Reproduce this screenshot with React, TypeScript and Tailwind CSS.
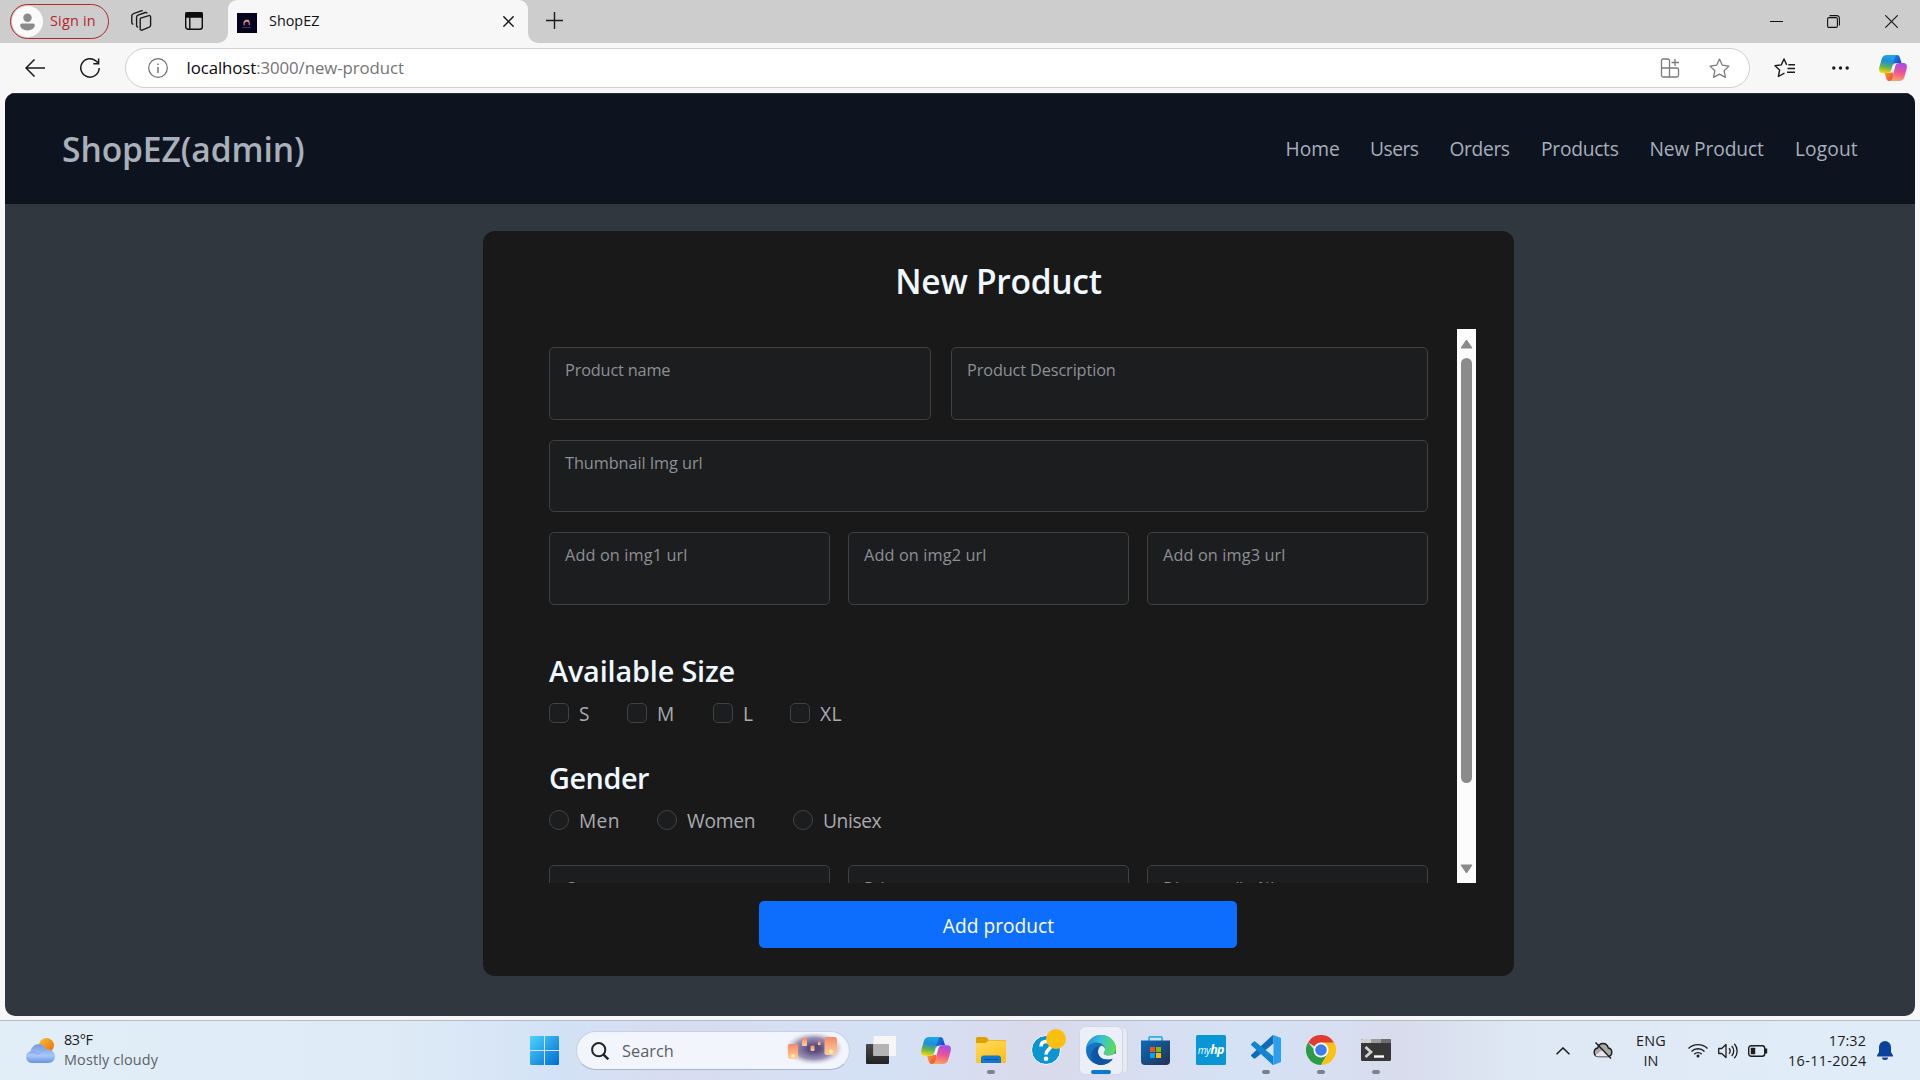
import type { ReactNode } from "react";

function Copilot({ id, className }: { id: string; className: string }) {
  return (
    <svg viewBox="0 0 28 26" className={className} preserveAspectRatio="none">
      <defs>
        <linearGradient id={id + "a"} x1="0.5" y1="0" x2="0.3" y2="1">
          <stop offset="0" stopColor="#1ea7ea" />
          <stop offset="0.35" stopColor="#1c8fd8" />
          <stop offset="0.65" stopColor="#5bb05a" />
          <stop offset="1" stopColor="#f5d800" />
        </linearGradient>
        <linearGradient id={id + "b"} x1="0.6" y1="0" x2="0.4" y2="1">
          <stop offset="0" stopColor="#a54df0" />
          <stop offset="0.5" stopColor="#ee5396" />
          <stop offset="1" stopColor="#fba45f" />
        </linearGradient>
        <linearGradient id={id + "c"} x1="0" y1="0" x2="1" y2="1">
          <stop offset="0" stopColor="#1a8ef0" />
          <stop offset="1" stopColor="#1b31b8" />
        </linearGradient>
        <linearGradient id={id + "d"} x1="0" y1="0" x2="1" y2="1">
          <stop offset="0" stopColor="#ffb03a" />
          <stop offset="1" stopColor="#e8402f" />
        </linearGradient>
      </defs>
      <path d="M13 0h5c2 0 2.600 1.500 3.200 3.800L22.500 8h-4c-2.500 0-3.500 1.500-4.200 4z" fill={`url(#${id}c)`} />
      <path d="M15 26h-5c-2 0-2.500-1.500-3.100-3.800L5.600 18h4c2.500 0 3.500-1.500 4.200-4z" fill={`url(#${id}d)`} />
      <path d="M8 0h11c-2 0-2.900 1.500-3.600 4l-2.800 10c-.8 3-1.700 4-4.200 4H3.500C.5 18-.4 15.500.3 12.500l2.400-8.700C3.500 1.300 5 0 8 0z" fill={`url(#${id}a)`} />
      <path d="M20 26H10c2 0 2.900-1.500 3.600-4l2.400-10c.8-3 1.700-4 4.200-4h4.300c3 0 3.900 2.500 3.200 5.500l-2.400 8.700C24.500 24.700 23 26 20 26z" fill={`url(#${id}b)`} />
      <path d="M17.300 8.600c-.9.700-1.300 1.900-1.700 3.400l-1.500 5.400h-2.600c.9-.7 1.200-1.900 1.600-3.400l1.600-5.400z" fill="#f7f5fb" />
    </svg>
  );
}

function TabStrip() {
  return (
    <div className="flex h-[43px] bg-[#cdcdcd]">
      <div className="mt-1 ml-[10px] flex h-[35px] w-[99px] items-center rounded-full border-[1.5px] border-[#b5262b] pl-px">
        <div className="flex size-[31px] items-center justify-center rounded-full bg-[#fafafa]">
          <svg viewBox="0 0 16 18" className="h-[18px] w-[15px]" fill="#8b8b8b">
            <circle cx="8" cy="4.500" r="4.500" />
            <path d="M2 10.500h12a1.800 1.800 0 0 1 1.800 1.800C15.800 16 12 18 8 18S.2 16 .2 12.300A1.800 1.800 0 0 1 2 10.500z" />
          </svg>
        </div>
        <span className="ml-[7px] pb-px text-[14.4px] leading-5 tracking-[0.2px] whitespace-nowrap text-[#b5262b]">Sign in</span>
      </div>
      <svg viewBox="0 0 22 22" className="mt-[10px] ml-[21px] size-[22px]" fill="none" stroke="#1b1b1b" strokeWidth="1.400">
        <path d="M10.700 8.200l8.200-2.600a1.300 1.300 0 0 1 1.700 1.200v8.400c0 1-.4 1.500-1.300 1.900l-7.300 3a1.300 1.300 0 0 1-1.800-1.200v-9c0-.9 0-1.400.5-1.700z" />
        <path d="M17 3.400c0-.8-.8-1.200-1.600-.9L8 5.200c-.9.3-1.400.9-1.400 1.900v8.500c0 1 .8 1.500 1.600 1.400" />
        <path d="M12.600 1.200c-.3-.4-.8-.5-1.400-.3L4.200 3.300c-1.200.4-2.400 1-2.400 2.300v6.800c0 1 .5 1.700 1.500 1.900" />
      </svg>
      <svg viewBox="0 0 18 18" className="mt-[12px] ml-[33px] size-[18px]" fill="none" stroke="#0d0d0d" strokeWidth="1.400">
        <rect x="0.700" y="0.700" width="16.600" height="16.600" rx="2.500" />
        <path d="M1 1h16v4H1z" fill="#0d0d0d" />
        <path d="M4.800 4v13" />
      </svg>
      <div className="flex w-[25px] items-end justify-end bg-[#f7f7f7]">
        <div className="h-full w-full rounded-br-[10px] bg-[#cdcdcd]" />
      </div>
      <div className="flex w-[300px] items-center rounded-t-[9px] bg-[#f7f7f7]">
        <svg viewBox="0 0 20 20" className="mt-[2px] ml-[9px] size-5">
          <rect width="20" height="20" fill="#05021f" />
          <path d="M7.500 12.300a2.700 2.700 0 1 1 4.600-.2" fill="none" stroke="#a257a8" strokeWidth="1.500" />
          <path d="M7.200 9.500a2.700 2.700 0 0 1 4.800-1" fill="none" stroke="#f0a05c" strokeWidth="1.500" />
          <path d="M5 14.500h9" stroke="#4a2b50" strokeWidth="1" />
        </svg>
        <span className="ml-3 w-[234px] pb-[2px] text-[14.4px] leading-5 text-[#111]">ShopEZ</span>
        <svg viewBox="0 0 10 10" className="size-[11px]" stroke="#1b1b1b" strokeWidth="1.400">
          <path d="M0.300 0.300l9.400 9.400M9.700 0.300L0.300 9.700" />
        </svg>
      </div>
      <div className="w-[12px] bg-[#f7f7f7]">
        <div className="h-full w-full rounded-bl-[10px] bg-[#cdcdcd]" />
      </div>
      <svg viewBox="0 0 17 17" className="mt-[12px] ml-[6px] size-[17px]" stroke="#1b1b1b" strokeWidth="1.400">
        <path d="M8.500 0v17M0 8.500h17" />
      </svg>
      <div className="ml-auto flex items-center pr-[22px]">
        <div className="mr-[44px] h-[1.500px] w-[13px] bg-[#111]" />
        <svg viewBox="0 0 13 13" className="mr-[45px] size-[13px]" fill="none" stroke="#111" strokeWidth="1.100">
          <rect x="0.600" y="2.600" width="9.800" height="9.800" rx="1.400" />
          <path d="M2.600 0.600h7.300a2.500 2.500 0 0 1 2.500 2.500v7.300" />
        </svg>
        <svg viewBox="0 0 13 13" className="size-[13px]" stroke="#111" strokeWidth="1.100">
          <path d="M0.300 0.300l12.400 12.400M12.700 0.300L0.300 12.700" />
        </svg>
      </div>
    </div>
  );
}

const star = "M10 1l2.700 5.900 6.300.8-4.600 4.400 1.200 6.400L10 15.400l-5.600 3.100 1.200-6.400L1 7.700l6.300-.8z";

function Toolbar() {
  return (
    <div className="flex h-[50px] items-center bg-[#f7f7f7]">
      <svg viewBox="0 0 20 18" className="-mt-px ml-[25px] h-[18px] w-5" fill="none" stroke="#1b1b1b" strokeWidth="1.500">
        <path d="M20 9H1M9.500 0.500L1 9l8.500 8.500" />
      </svg>
      <svg viewBox="0 0 20 20" className="ml-[35px] size-5" fill="none" stroke="#1b1b1b" strokeWidth="1.500">
        <path d="M19.200 10a9.200 9.200 0 1 1-2.600-6.500l1.800 2M18.600 0.500v5.200h-5.300" />
      </svg>
      <div className="ml-[25px] flex h-10 w-[1625px] items-center rounded-full border border-[#cfcfcf] bg-white">
        <svg viewBox="0 0 20 20" className="ml-[21.500px] size-5" fill="none" stroke="#6b6b6b" strokeWidth="1.200">
          <circle cx="10" cy="10" r="9.300" />
          <path d="M10 9v6M10 5.500v1.600" strokeWidth="1.400" />
        </svg>
        <div className="ml-[19px] text-[16.8px] leading-6 tracking-[-0.070px] text-[#747474]">
          <span className="text-[#0a0a0a]">localhost</span>:3000/new-product
        </div>
        <svg viewBox="0 0 20 20" className="mr-[29px] ml-auto size-5" fill="none" stroke="#7a7a7a" strokeWidth="1.300">
          <path d="M9.500 19V2.500A1.500 1.500 0 0 0 8 1H3a1.500 1.500 0 0 0-1.500 1.500V17.500A1.500 1.500 0 0 0 3 19h14a1.500 1.500 0 0 0 1.500-1.500V11.500A1.500 1.500 0 0 0 17 10H1.500M15 1v7M11.500 4.500h7.500" />
        </svg>
        <svg viewBox="0 0 20 20" className="mr-[19.500px] size-[21px]" fill="none" stroke="#7a7a7a" strokeWidth="1.200" strokeLinejoin="round">
          <path d={star} />
        </svg>
      </div>
      <svg viewBox="0 0 21 20" className="ml-[24px] h-5 w-[21px]" fill="none" stroke="#1b1b1b" strokeWidth="1.400" strokeLinejoin="round">
        <path d="M10.500 15.600l-.5-.2-5.600 3.100 1.200-6.400L1 7.700l6.300-.8L10 1l2.700 5.900M13.500 10.500H21M14.300 6.800H21M13 14.300h8" />
      </svg>
      <svg viewBox="0 0 17 4" className="ml-[36.500px] h-1 w-[17px]" fill="#1b1b1b">
        <circle cx="1.800" cy="2" r="1.700" />
        <circle cx="8.500" cy="2" r="1.700" />
        <circle cx="15.200" cy="2" r="1.700" />
      </svg>
      <Copilot id="tb" className="ml-[30.500px] h-[26px] w-[28px]" />
    </div>
  );
}

const links: [string, string][] = [
  ["Home", "w-[84.500px]"],
  ["Users", "w-[79.500px] tracking-[-0.500px]"],
  ["Orders", "w-[91.500px] tracking-[-0.350px]"],
  ["Products", "w-[108.500px] tracking-[-0.250px]"],
  ["New Product", "w-[145.500px] tracking-[-0.120px]"],
  ["Logout", "w-[64px] tracking-[0.100px]"],
];

function Field({ label, className }: { label: string; className: string }) {
  return (
    <div className={"shrink-0 rounded-[5px] border border-[#3e4042] bg-[#1c1d1f] px-[15px] pt-[10px] text-[16.300px] leading-6 text-[#8d9094] " + className}>
      {label}
    </div>
  );
}

function Choice({ label, box, text }: { label: string; box: string; text: string }) {
  return (
    <label className={"flex h-5 shrink-0 items-center text-[19.200px] leading-5 text-[#a8abaf] " + text}>
      <span className={"mr-[10px] size-5 shrink-0 border border-[#404244] bg-[#1c1d1f] " + box} />
      <span className="pt-[2px]">{label}</span>
    </label>
  );
}

function Scrollbar() {
  return (
    <div className="flex h-[554px] w-[19px] flex-col items-center bg-[#fcfcfc]">
      <svg viewBox="0 0 13 10" className="mt-[10px] h-[10px] w-[13px]" fill="#8b8b8b" stroke="#8b8b8b" strokeLinejoin="round">
        <path d="M6.500 1L12 9H1z" />
      </svg>
      <div className="mt-[9px] h-[425px] w-[11px] rounded-full bg-[#8b8b8b]" />
      <svg viewBox="0 0 13 10" className="mt-auto mb-[9px] h-[10px] w-[13px]" fill="#8b8b8b" stroke="#8b8b8b" strokeLinejoin="round">
        <path d="M6.500 9L12 1H1z" />
      </svg>
    </div>
  );
}

function Page() {
  return (
    <div className="mx-[5px] h-[923px] overflow-hidden rounded-[10px] bg-[#30373f]">
      <header className="flex h-[111px] items-center border-t border-[#2a3038] bg-[#0d141f]">
        <h1 className="ml-[57px] text-[33.600px] leading-10 font-semibold tracking-[-0.080px] text-[#a9b0ba]">ShopEZ(admin)</h1>
        <nav className="ml-auto flex pr-[56px] text-[19.200px] leading-6 whitespace-nowrap text-[#a7afbb]">
          {links.map(([name, style]) => (
            <a key={name} className={style}>{name}</a>
          ))}
        </nav>
      </header>
      <main className="mt-[27px] ml-[478px] flex h-[745px] w-[1031px] flex-col rounded-[12px] bg-[#191919]">
        <h2 className="mt-[30px] h-10 text-center text-[33.600px] leading-10 font-semibold tracking-[-0.300px] text-[#f0f8ff]">New Product</h2>
        <div className="mt-[28px] flex h-[554px] overflow-hidden">
          <div className="ml-[66px] w-[908px] shrink-0 pt-[18px]">
            <div className="flex w-[879px] justify-between">
              <Field label="Product name" className="h-[73px] w-[382px] tracking-[-0.160px]" />
              <Field label="Product Description" className="h-[73px] w-[477px] tracking-[-0.120px]" />
            </div>
            <Field label="Thumbnail Img url" className="mt-5 h-[72px] w-[879px] tracking-[-0.080px]" />
            <div className="mt-5 flex w-[879px] justify-between">
              <Field label="Add on img1 url" className="h-[73px] w-[281px] tracking-[0.120px]" />
              <Field label="Add on img2 url" className="h-[73px] w-[281px] tracking-[0.120px]" />
              <Field label="Add on img3 url" className="h-[73px] w-[281px] tracking-[0.120px]" />
            </div>
            <h3 className="mt-[48px] h-9 text-[28.800px] leading-9 font-semibold tracking-[-0.150px] text-[#f0f8ff]">Available Size</h3>
            <div className="mt-[14px] flex">
              <Choice label="S" box="rounded-[5px]" text="w-[78px]" />
              <Choice label="M" box="rounded-[5px]" text="w-[86px]" />
              <Choice label="L" box="rounded-[5px]" text="w-[77px]" />
              <Choice label="XL" box="rounded-[5px]" text="tracking-[0.500px]" />
            </div>
            <h3 className="mt-[37px] h-9 text-[28.800px] leading-9 font-semibold tracking-[-0.450px] text-[#f0f8ff]">Gender</h3>
            <div className="mt-[14px] flex">
              <Choice label="Men" box="rounded-full" text="w-[108px] tracking-[0.300px]" />
              <Choice label="Women" box="rounded-full" text="w-[136px] tracking-[-0.250px]" />
              <Choice label="Unisex" box="rounded-full" text="tracking-[-0.400px]" />
            </div>
            <div className="mt-[35px] flex w-[879px] justify-between">
              <Field label="Category" className="h-[73px] w-[281px]" />
              <Field label="Price" className="h-[73px] w-[281px]" />
              <Field label="Discount (in %)" className="h-[73px] w-[281px]" />
            </div>
          </div>
          <Scrollbar />
        </div>
        <button className="mt-[18px] ml-[276px] h-[47px] w-[478px] rounded-[5px] bg-[#0d6efd] pt-[2px] pl-px text-[19.200px] leading-6 text-white">Add product</button>
      </main>
    </div>
  );
}

function TaskItem({ children, mark }: { children: ReactNode; mark?: boolean }) {
  return (
    <div className="flex h-[60px] w-[55px] shrink-0 flex-col items-center pt-[14px]">
      <div className="flex h-[30px] items-center justify-center">{children}</div>
      {mark && <div className="mt-[5px] h-1 w-2 rounded-full bg-[#7d8189]" />}
    </div>
  );
}

function Lantern() {
  return (
    <svg viewBox="0 0 56 31" className="h-[31px] w-[56px]">
      <defs>
        <radialGradient id="night">
          <stop offset="0.200" stopColor="#584c80" />
          <stop offset="0.650" stopColor="#8a80a8" stopOpacity="0.850" />
          <stop offset="1" stopColor="#c8c4dc" stopOpacity="0" />
        </radialGradient>
        <linearGradient id="lamp" x1="0" y1="0" x2="0" y2="1">
          <stop offset="0" stopColor="#f58a63" />
          <stop offset="1" stopColor="#ffcf9e" />
        </linearGradient>
      </defs>
      <ellipse cx="28" cy="15.500" rx="29" ry="16.500" fill="url(#night)" />
      <g fill="url(#lamp)">
        <rect x="2" y="11" width="10" height="15" rx="2" />
        <rect x="16" y="5" width="5" height="8" rx="1" />
        <rect x="24.500" y="12.500" width="4" height="5.500" rx="1" />
        <rect x="32" y="8.500" width="2.500" height="3.500" rx="0.500" />
        <rect x="38.500" y="4" width="12.500" height="18" rx="2.500" />
      </g>
      <circle cx="7" cy="23" r="1.800" fill="#fff2a0" />
      <circle cx="45" cy="18.500" r="2" fill="#fff2a0" />
    </svg>
  );
}

function Taskbar() {
  return (
    <div className="flex h-[60px] items-start border-t border-[#b3bcc6] bg-[linear-gradient(90deg,#e1edf7_0%,#dfebf6_20%,#d3e2f6_29%,#d8dcf0_35%,#d4e1f5_46%,#d9daeb_54%,#d5e2f6_65%,#d8dcec_73%,#dfe9f5_80%,#e0edf8_100%)]">
      <svg viewBox="0 0 30 26" className="mt-[17px] ml-[25px] h-[26px] w-[30px]">
        <defs>
          <linearGradient id="sun" x1="0" y1="0" x2="1" y2="1">
            <stop offset="0" stopColor="#f5c131" />
            <stop offset="1" stopColor="#ef6a10" />
          </linearGradient>
          <linearGradient id="cloud" x1="0" y1="0" x2="0" y2="1">
            <stop offset="0" stopColor="#6f9ae8" />
            <stop offset="0.600" stopColor="#a9c6f7" />
            <stop offset="1" stopColor="#6a93e6" />
          </linearGradient>
        </defs>
        <circle cx="21.500" cy="7.500" r="7.500" fill="url(#sun)" />
        <path d="M6 25a6 6 0 0 1-.5-11.700C6.500 9 9.500 6.300 13.500 6.300c3.700 0 6.300 2 7.500 5.200 5-.8 9 2.500 9 6.800 0 4-3 6.700-6.700 6.700z" fill="url(#cloud)" />
        <path d="M5 14.500c3-1 6 0 8 2 2-2.500 5-5 8-5" fill="none" stroke="#7b9fea" strokeWidth="0.800" />
      </svg>
      <div className="mt-[9px] ml-[9px] w-[466px] text-[14.400px] leading-5">
        <div className="tracking-[-0.400px] text-[#191919]">83°F</div>
        <div className="tracking-[0.150px] text-[#5c6167]">Mostly cloudy</div>
      </div>
      <svg viewBox="0 0 29 29" className="mt-[15px] size-[29px] shrink-0">
        <defs>
          <linearGradient id="win" x1="0" y1="0" x2="1" y2="1">
            <stop offset="0" stopColor="#4fd3ff" />
            <stop offset="1" stopColor="#006cd0" />
          </linearGradient>
        </defs>
        <path d="M1 0h13v14H0V1a1 1 0 0 1 1-1zM15 0h13a1 1 0 0 1 1 1v13H15zM0 15h14v14H1a1 1 0 0 1-1-1zM15 15h14v13a1 1 0 0 1-1 1H15z" fill="url(#win)" />
      </svg>
      <div className="mt-[10px] ml-[17px] flex h-[39px] w-[274px] shrink-0 items-center rounded-full border border-b-[#a9b3c8] border-[#c6d0e0] bg-[#f2f5fc]">
        <svg viewBox="0 0 18 18" className="ml-[14px] size-[18px]" fill="none" stroke="#242424" strokeWidth="2">
          <circle cx="7.700" cy="7.700" r="6.600" />
          <path d="M12.300 12.300l5 5" strokeWidth="2.400" />
        </svg>
        <span className="ml-[12px] w-[114px] pl-px text-[16.300px] leading-6 tracking-[0.050px] text-[#5b5e64]">Search</span>
        <div className="ml-[51px] -translate-y-[2px]">
          <Lantern />
        </div>
      </div>
      <div className="ml-[3px] flex">
        <TaskItem>
          <svg viewBox="0 0 30 28" className="h-[28px] w-[30px]">
            <defs>
              <linearGradient id="tv" x1="0" y1="0" x2="0" y2="1">
                <stop offset="0" stopColor="#4a4a48" />
                <stop offset="1" stopColor="#222" />
              </linearGradient>
            </defs>
            <rect y="8" width="23" height="20" rx="1" fill="url(#tv)" />
            <rect x="7.500" width="22.500" height="20" rx="1" fill="#f6f6f6" />
            <rect x="7.500" y="8" width="15.500" height="12" fill="#b4b4b4" />
          </svg>
        </TaskItem>
        <TaskItem>
          <Copilot id="bar" className="h-[27px] w-[30px]" />
        </TaskItem>
        <TaskItem mark>
          <svg viewBox="0 0 30 26" className="h-[26px] w-[30px]">
            <defs>
              <linearGradient id="fold" x1="0" y1="0" x2="0.500" y2="1">
                <stop offset="0" stopColor="#ffda62" />
                <stop offset="1" stopColor="#fcc21b" />
              </linearGradient>
            </defs>
            <path d="M0 1.500A1.500 1.500 0 0 1 1.500 0h8.600l2.800 3H29a1 1 0 0 1 1 1v8H0z" fill="#e0a000" />
            <path d="M0 6h9.500l3-2.500H29a1 1 0 0 1 1 1V26H0z" fill="url(#fold)" />
            <path d="M5 26v-4.500a3 3 0 0 1 3-3h14a3 3 0 0 1 3 3V26z" fill="#0f78d0" />
            <path d="M8 22.500h14" stroke="#0a4f96" strokeWidth="1" />
          </svg>
        </TaskItem>
        <TaskItem>
          <div className="relative flex size-[30px] items-center justify-center rounded-full border-[1.500px] border-white bg-[#0d95d2]">
            <svg viewBox="0 0 14 22" className="h-[23px] w-[14px]" fill="none" stroke="#fff" strokeWidth="3.600">
              <path d="M2 7C2 3.500 4 2 7 2s5 1.600 5 4.300C12 10 7 10 7 15" />
              <circle cx="7" cy="19.300" r="2.300" fill="#fff" stroke="none" />
            </svg>
            <span className="absolute -top-[7px] left-[14.500px] size-[20px] rounded-full bg-[#fdbf0f]" />
          </div>
        </TaskItem>
        <div className="flex w-[55px] justify-center pt-[5px] pl-px">
          <div className="relative flex h-[49px] w-[44px] flex-col items-center rounded-[6px] border border-[#d5d8e4] bg-[#eceff8] pt-[8px]">
            <span className="absolute top-0 left-[43px] h-[47px] w-[5px] rounded-r-[6px] border border-l-0 border-[#d0d4e2] bg-[#e6e9f4]" />
            <svg viewBox="0 0 30 30" className="size-[30px] shrink-0">
              <defs>
                <linearGradient id="edgeTop" x1="0" y1="0.300" x2="1" y2="0.500">
                  <stop offset="0" stopColor="#1f8fe0" />
                  <stop offset="0.450" stopColor="#35c1d8" />
                  <stop offset="1" stopColor="#62dd4e" />
                </linearGradient>
                <linearGradient id="edgeLow" x1="0" y1="0" x2="1" y2="1">
                  <stop offset="0" stopColor="#1a86d8" />
                  <stop offset="1" stopColor="#0c4a94" />
                </linearGradient>
              </defs>
              <circle cx="15" cy="15" r="15" fill="url(#edgeLow)" />
              <path d="M0.200 13C1.500 5.500 7.500 0 15 0c8.500 0 15 6 15 13.500 0 4.500-3.500 7-7.500 7-3.500 0-5-1.300-4.800-2.500.2-.8 1.300-1.500 1.300-3.700C19 11 15.500 7.500 10.500 7.500 5.500 7.500 2 10 .2 13z" fill="url(#edgeTop)" />
              <path d="M17.700 18c-.2 1.200 1.300 2.500 4.800 2.500 2.400 0 4.400-.7 6-1.900l1.500.4v4l-2.600 1.300c-2 .9-5.900.2-7.900 0-5-.5-8-4.500-7.500-8.500.3-2.800 1.800-4.600 4-5.300C18 12 19 13 19 14.500c0 2-1 2.500-1.300 3.500z" fill="#eceff8" />
              <path d="M12 17c0 4 3.500 7.800 8 7.800 2.500 0 5-.5 6.800-1.600A15 15 0 0 1 13.500 30C9 29 5.500 25 5.500 20c0-5 3.500-8 8-8.500C12.500 13 12 15 12 17z" fill="#0f55a5" />
            </svg>
            <span className="mt-[5px] h-1 w-5 shrink-0 rounded-full bg-[#0a78d4]" />
          </div>
        </div>
        <TaskItem>
          <svg viewBox="0 0 29 29" className="size-[29px]">
            <defs>
              <linearGradient id="store" x1="0" y1="0" x2="1" y2="1">
                <stop offset="0" stopColor="#0c6cbc" />
                <stop offset="1" stopColor="#243050" />
              </linearGradient>
            </defs>
            <path d="M8 6V2.200A1.400 1.400 0 0 1 9.400.8h10.200A1.400 1.400 0 0 1 21 2.200V6" fill="none" stroke="#29b2ee" strokeWidth="1.700" />
            <path d="M0 4.500h29V25a4 4 0 0 1-4 4H4a4 4 0 0 1-4-4z" fill="url(#store)" />
            <path d="M9 11h5v5H9z" fill="#f25022" />
            <path d="M15 11h5v5h-5z" fill="#7fba00" />
            <path d="M9 17h5v5H9z" fill="#00a4ef" />
            <path d="M15 17h5v5h-5z" fill="#ffb900" />
          </svg>
        </TaskItem>
        <TaskItem>
          <div className="flex size-[30px] items-center justify-center rounded-[1.500px] bg-[#0896d6] leading-none text-white">
            <span className="text-[10px] tracking-[-0.300px] italic">my</span>
            <span className="text-[12.500px] font-bold tracking-[-1px] italic">hp</span>
          </div>
        </TaskItem>
        <TaskItem mark>
          <svg viewBox="0 0 30 30" className="size-[30px]">
            <path d="M22.500 0v8.500L4.500 23.200a1.500 1.500 0 0 1-2 0L.6 21.400a1.300 1.300 0 0 1 0-2L21.300.6c.3-.3.800-.6 1.200-.6z" fill="#0f6db8" />
            <path d="M22.500 30v-8.500L4.500 6.800a1.500 1.500 0 0 0-2 0L.6 8.600a1.300 1.300 0 0 0 0 2l20.700 18.800c.3.300.800.600 1.200.6z" fill="#1385d0" />
            <path d="M22.500 0L30 3v24l-7.500 3z" fill="#2aa0ee" />
          </svg>
        </TaskItem>
        <TaskItem mark>
          <svg viewBox="0 0 30 30" className="size-[30px]">
            <path d="M15 15L2 7.500a15 15 0 0 1 26 0z" fill="#e33b2e" />
            <path d="M15 15h-6.500L2 7.500A15 15 0 0 0 15 30l6.500-11.300z" fill="#2c9a47" />
            <path d="M15 7.500h13A15 15 0 0 1 15 30l6.500-11.300z" fill="#fdc116" />
            <circle cx="15" cy="15" r="7.500" fill="#fff" />
            <circle cx="15" cy="15" r="5.800" fill="#3b7ded" />
          </svg>
        </TaskItem>
        <TaskItem mark>
          <svg viewBox="0 0 30 22" className="h-[22px] w-[30px]">
            <rect width="30" height="22" rx="1.500" fill="#373737" />
            <path d="M1.500 0H10v4H0V1.500A1.500 1.500 0 0 1 1.500 0z" fill="#cfcfcf" />
            <path d="M10 0h10v4H10z" fill="#9c9c9c" />
            <path d="M20 0h8.500A1.500 1.500 0 0 1 30 1.500V4H20z" fill="#6e6e6e" />
            <path d="M4.500 8l5.500 5-5.500 5" fill="none" stroke="#d0d0d0" strokeWidth="2.800" />
            <path d="M13 17.500h10" stroke="#fff" strokeWidth="2.400" />
          </svg>
        </TaskItem>
      </div>
      <div className="ml-auto flex h-[59px] items-center">
        <svg viewBox="0 0 14 8" className="mr-[23px] h-2 w-[14px]" fill="none" stroke="#1d1d1d" strokeWidth="1.600">
          <path d="M0.500 7.300L7 1l6.500 6.300" />
        </svg>
        <svg viewBox="0 0 20 17" className="mr-[23px] h-[17px] w-5" fill="none" stroke="#1d1d1d" strokeWidth="1.400">
          <path d="M5 14.500a4.300 4.300 0 0 1-.3-8.500C5.500 3 7.500 1.500 10 1.500S14.500 3 15.300 6a4.300 4.300 0 0 1-.3 8.500z" fill="#a9a9a9" />
          <path d="M2.500 13l7-5 7 5.500c-1 1-2 1-3 1H5c-1 0-2-.5-2.500-1.500z" fill="#e6e6e6" stroke="none" />
          <path d="M2.500 0.500l15.500 16" />
        </svg>
        <div className="mr-[22px] w-[30px] text-center text-[14.400px] leading-5 text-[#1d1d1d]">
          <div className="tracking-[0.250px]">ENG</div>
          <div>IN</div>
        </div>
        <svg viewBox="0 0 20 15" className="mr-[10px] h-[15px] w-5" fill="none" stroke="#1d1d1d" strokeWidth="1.400">
          <path d="M0.500 5.500a13.500 13.500 0 0 1 19 0M3.500 8.500a9.200 9.200 0 0 1 13 0M6.300 11.200a5.200 5.200 0 0 1 7.400 0" />
          <circle cx="10" cy="13" r="1.500" fill="#1d1d1d" stroke="none" />
        </svg>
        <svg viewBox="0 0 20 16" className="mr-[10px] h-4 w-5" fill="none" stroke="#1d1d1d" strokeWidth="1.300" strokeLinejoin="round">
          <path d="M0.700 5.500h3L8 1.500v13L3.700 10.500h-3zM11 5.300a4 4 0 0 1 0 5.400M13.700 3a7.200 7.200 0 0 1 0 10M16.300 0.800a10.500 10.500 0 0 1 0 14.400" />
        </svg>
        <svg viewBox="0 0 20 12" className="mr-[20px] h-3 w-5" fill="none" stroke="#1d1d1d" strokeWidth="1.400">
          <rect x="0.700" y="0.700" width="16" height="10.600" rx="2.500" />
          <rect x="2.800" y="2.800" width="4.400" height="6.400" rx="0.500" fill="#1d1d1d" stroke="none" />
          <path d="M18 3.500v5" strokeWidth="2.400" />
        </svg>
        <div className="w-[78px] text-right text-[14.400px] leading-5 whitespace-nowrap text-[#1d1d1d]">
          <div className="tracking-[0.100px]">17:32</div>
          <div className="tracking-[0.350px]">16-11-2024</div>
        </div>
        <svg viewBox="0 0 16 19" className="mr-[27px] ml-[11px] h-[19px] w-4" fill="#0a439c">
          <path d="M8 0a6 6 0 0 1 6 6v5l2 3.500c.2.600-.1 1-.700 1H.7c-.600 0-.9-.4-.7-1L2 11V6a6 6 0 0 1 6-6zM5 16.500h6a3 2.500 0 0 1-6 0z" />
        </svg>
      </div>
    </div>
  );
}

export default function App() {
  return (
    <div className="h-[1080px] w-[1920px] overflow-hidden bg-[#f7f7f7] font-['Open_Sans',sans-serif]">
      <TabStrip />
      <Toolbar />
      <Page />
      <div className="h-1" />
      <Taskbar />
    </div>
  );
}
